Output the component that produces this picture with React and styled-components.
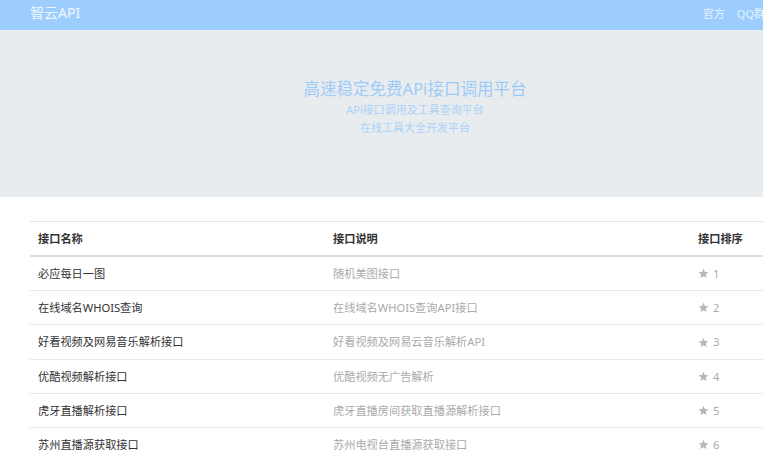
import React from "react";
import styled, { createGlobalStyle } from "styled-components";

const GlobalStyle = createGlobalStyle`
    html, body {
        margin: 0;
        padding: 0;
        background: #fff;
        overflow: hidden;
        font-family: "Noto Sans", "Noto Sans CJK SC", sans-serif;
    }
`;

const Page = styled.div`
    width: 830px;
`;

const Navbar = styled.div`
    height: 30px;
    background-color: #9dcdfd;
    display: flex;
    align-items: center;
    justify-content: space-between;
    padding: 0 30px;
`;

const Brand = styled.div`
    color: #eef6ff;
    font-size: 14px;
    line-height: 24px;
    margin-top: -5px;
`;

const NavLinks = styled.div`
    display: flex;
    gap: 12px;
    margin-top: -4px;
    margin-right: 35px;
`;

const NavLink = styled.a`
    color: #e6f2ff;
    font-size: 11px;
    text-decoration: none;
`;

const Jumbotron = styled.div`
    height: 167px;
    box-sizing: border-box;
    background-color: #e9ecef;
    padding-top: 47px;
    display: flex;
    flex-direction: column;
    align-items: center;
    color: #9ccbf6;
`;

const Title = styled.h1`
    margin: 0;
    font-size: 16.5px;
    font-weight: 400;
    line-height: 24px;
`;

const Sub = styled.p`
    margin: 0;
    font-size: 11px;
    line-height: 18px;
    color: #a9d2f8;
`;

const Container = styled.div`
    margin: 24px 30px 0;
`;

const Table = styled.table`
    width: 770px;
    border-collapse: collapse;
    font-size: 11.2px;
    table-layout: fixed;
`;

const Th = styled.th`
    box-sizing: border-box;
    text-align: left;
    font-weight: 700;
    color: #333;
    padding: 8px 8px;
    line-height: 17px;
    border-top: 1px solid #e5e5e5;
    border-bottom: 2px solid #dedede;
    width: ${({ w }) => w}px;
`;

const Td = styled.td`
    padding: 8px 8px;
    line-height: 17.2px;
    border-bottom: 1px solid #e8e8e8;
    color: ${({ muted }) => (muted ? "#aaa" : "#333")};
`;

const Rank = styled.span`
    display: inline-flex;
    align-items: center;
    vertical-align: top;
    gap: 4px;
    color: #aaa;
`;

const Star = () => (
    <svg width="11" height="11" viewBox="0 0 24 24" fill="#b8b8b8">
        <path d="M12 1.5l3.2 7 7.6.8-5.7 5.1 1.6 7.5L12 18l-6.7 3.9 1.6-7.5L1.2 9.3l7.6-.8z" />
    </svg>
);

const apis = [
    { name: "必应每日一图", desc: "随机美图接口" },
    { name: "在线域名WHOIS查询", desc: "在线域名WHOIS查询API接口" },
    { name: "好看视频及网易音乐解析接口", desc: "好看视频及网易云音乐解析API" },
    { name: "优酷视频解析接口", desc: "优酷视频无广告解析" },
    { name: "虎牙直播解析接口", desc: "虎牙直播房间获取直播源解析接口" },
    { name: "苏州直播源获取接口", desc: "苏州电视台直播源获取接口" },
];

const App = () => {
    return (
        <Page>
            <GlobalStyle />
            <Navbar>
                <Brand>智云API</Brand>
                <NavLinks>
                    <NavLink href="#">官方</NavLink>
                    <NavLink href="#">QQ群</NavLink>
                </NavLinks>
            </Navbar>
            <Jumbotron>
                <Title>高速稳定免费APi接口调用平台</Title>
                <Sub>APi接口调用及工具查询平台</Sub>
                <Sub>在线工具大全开发平台</Sub>
            </Jumbotron>
            <Container>
                <Table>
                    <thead>
                        <tr>
                            <Th w={295}>接口名称</Th>
                            <Th w={365}>接口说明</Th>
                            <Th w={110}>接口排序</Th>
                        </tr>
                    </thead>
                    <tbody>
                        {apis.map((a, i) => (
                            <tr key={a.name}>
                                <Td>{a.name}</Td>
                                <Td muted>{a.desc}</Td>
                                <Td>
                                    <Rank>
                                        <Star />
                                        {i + 1}
                                    </Rank>
                                </Td>
                            </tr>
                        ))}
                    </tbody>
                </Table>
            </Container>
        </Page>
    );
};

export default App;
